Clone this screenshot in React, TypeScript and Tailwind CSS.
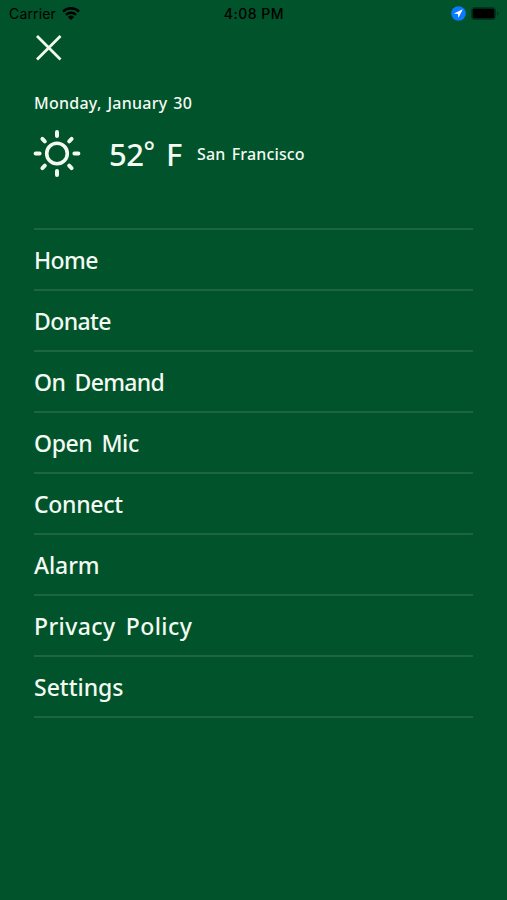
import React from 'react';

const menuItems = [
  { label: 'Home', spacing: 'tracking-[-0.6px]' },
  { label: 'Donate', spacing: 'tracking-[-0.6px]' },
  { label: 'On Demand', spacing: 'tracking-[-0.65px] [word-spacing:4px]' },
  { label: 'Open Mic', spacing: 'tracking-[-0.4px] [word-spacing:3.5px]' },
  { label: 'Connect', spacing: 'tracking-[-0.3px]' },
  { label: 'Alarm', spacing: 'tracking-[-0.1px]' },
  { label: 'Privacy Policy', spacing: 'tracking-[0.4px] [word-spacing:4px]' },
  { label: 'Settings', spacing: 'tracking-normal' },
];

function StatusBar() {
  return (
    <div className="grid grid-cols-3 items-center h-[27px] pl-[9px] pr-[8px] text-black font-['Inter',sans-serif] text-[14px] leading-none">
      <div className="flex items-center gap-[6px]">
        <span className="tracking-[0.15px] whitespace-nowrap">Carrier</span>
        <svg width="18" height="13" viewBox="0 0 18 13" fill="none" stroke="black" strokeWidth="2.4">
          <path d="M1 4.6a11.4 11.4 0 0 1 16 0" />
          <path d="M4 7.8a7.2 7.2 0 0 1 10 0" />
          <path d="M9 13 5.9 9.9a4.5 4.5 0 0 1 6.2 0Z" fill="black" stroke="none" />
        </svg>
      </div>
      <span className="text-center font-medium tracking-[0.5px] whitespace-nowrap">4:08 PM</span>
      <div className="flex items-center justify-end gap-[5px]">
        <svg width="15" height="15" viewBox="0 0 15 15">
          <circle cx="7.5" cy="7.5" r="7.3" fill="#0a7aff" />
          <path d="M11.8 3.3 2.9 7.5l4 .5.5 4.1Z" fill="white" />
        </svg>
        <svg width="28" height="13" viewBox="0 0 28 13">
          <rect x="0.5" y="0.5" width="24" height="12" rx="3" fill="none" stroke="black" strokeOpacity="0.35" />
          <rect x="1.5" y="1.5" width="22" height="10" rx="1.5" fill="black" />
          <path d="M26 4.5v4c1-.4 1.5-1.1 1.5-2s-.5-1.6-1.5-2Z" fill="black" fillOpacity="0.4" />
        </svg>
      </div>
    </div>
  );
}

function SunIcon() {
  return (
    <svg width="48" height="48" viewBox="0 0 48 48" fill="none" stroke="currentColor" strokeWidth="4" strokeLinecap="round">
      <circle cx="24" cy="23.5" r="10.3" strokeWidth="3.6" />
      <path d="M24 2.1v4M24 40.9v4M2.6 23.5h4M41.4 23.5h4M9.4 8.9l2.4 2.4M36.2 35.7l2.4 2.4M9.4 38.1l2.4-2.4M36.2 11.3l2.4-2.4" />
    </svg>
  );
}

export default function App() {
  return (
    <div className="w-full h-[900px] overflow-hidden bg-[#00532a] text-[#f3faf2] font-['Noto_Sans',sans-serif]">
      <StatusBar />

      <div className="px-[34px]">
        <button className="block mt-[8px] ml-[2px]" aria-label="Close menu">
          <svg width="26" height="26" viewBox="0 0 26 26" fill="none" stroke="currentColor" strokeWidth="2.8">
            <path d="m1 1 23.5 23.5M24.5 1 1 24.5" />
          </svg>
        </button>

        <p className="mt-[30px] h-[24px] leading-[24px] text-[16px] font-medium tracking-[0.25px] [word-spacing:1.5px] whitespace-nowrap">Monday, January 30</p>

        {/* Weather */}
        <div className="flex items-center h-[48px] mt-[15px] -ml-[1px] whitespace-nowrap">
          <SunIcon />
          <span className="ml-[28px] w-[88px] text-[31px] leading-[48px] font-medium tracking-[-0.5px] [word-spacing:4px]">
            52<span className="text-[27px] leading-none align-[5px]">°</span> F
          </span>
          <span className="text-[16px] leading-[48px] font-medium tracking-[0.15px] [word-spacing:2px]">San Francisco</span>
        </div>

        {/* Menu links */}
        <nav className="mt-[49.5px] border-t-2 border-[#1e6641]">
          {menuItems.map((item) => (
            <a key={item.label} className="flex items-center h-[61.1px] pt-[2px] border-b-2 border-[#1e6641] text-[23px] leading-none font-medium whitespace-nowrap">
              <span className={item.spacing}>{item.label}</span>
            </a>
          ))}
        </nav>
      </div>
    </div>
  );
}
